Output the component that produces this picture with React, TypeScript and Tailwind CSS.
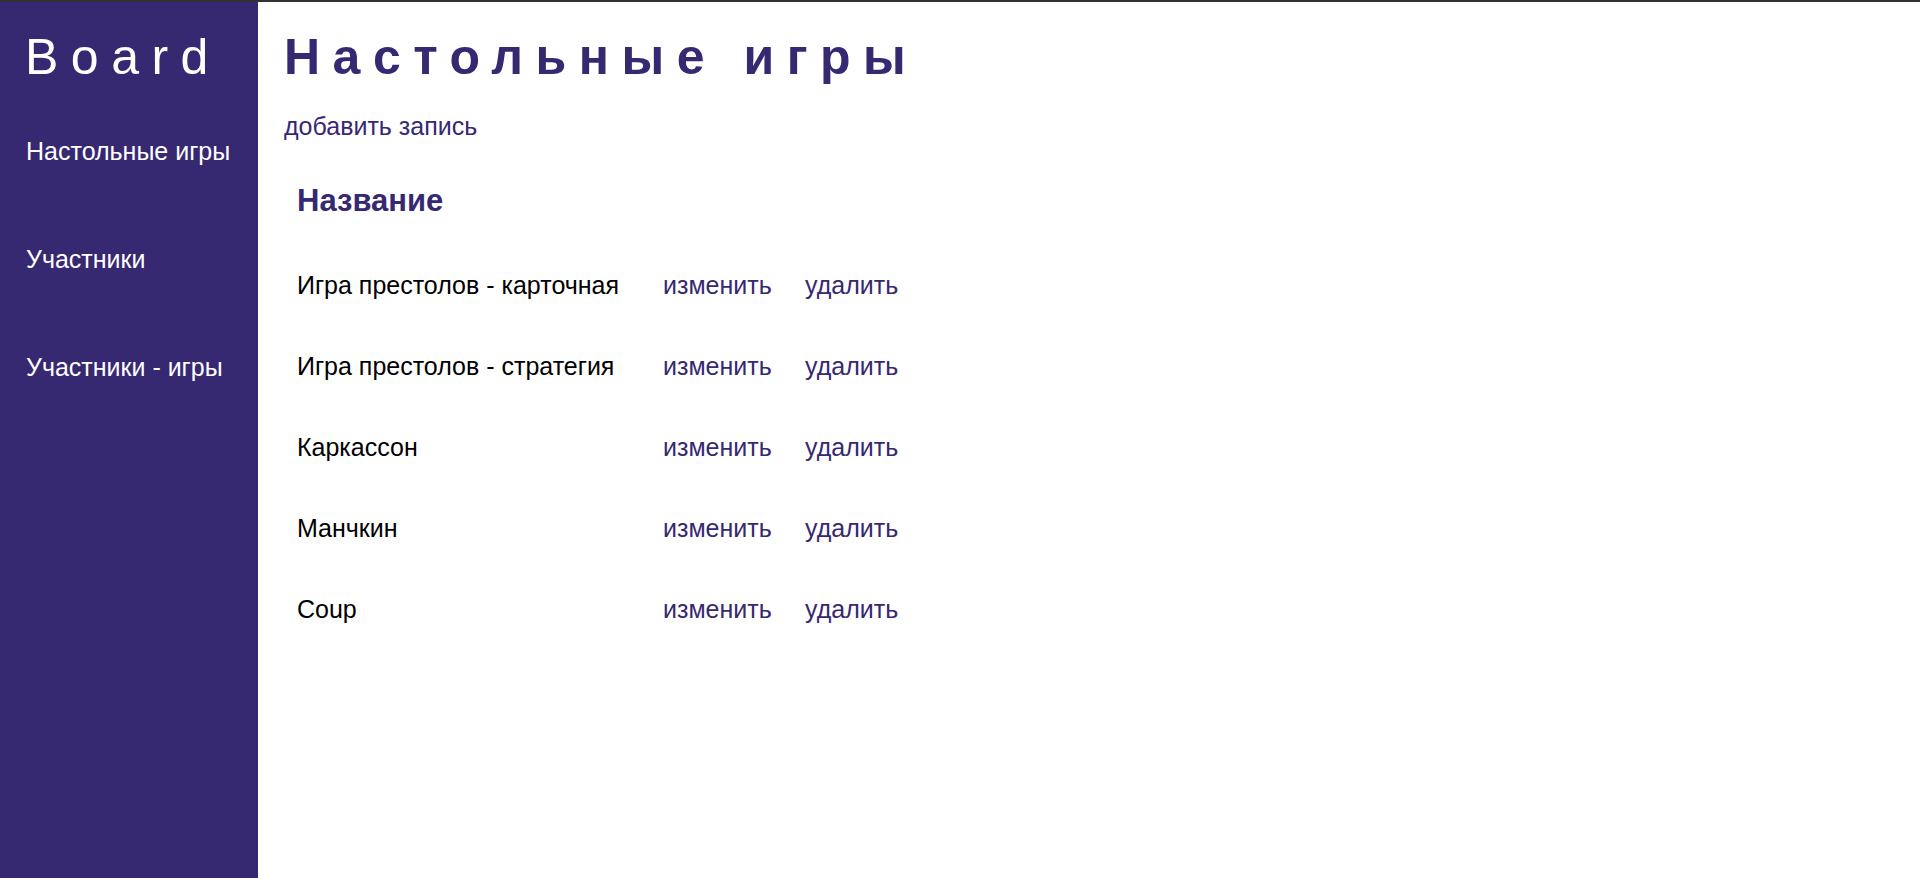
const games = [
  'Игра престолов - карточная',
  'Игра престолов - стратегия',
  'Каркассон',
  'Манчкин',
  'Coup',
];

const navItems = ['Настольные игры', 'Участники', 'Участники - игры'];

export default function App() {
  return (
    <div className="flex h-[878px] border-t-2 border-[#333333] bg-white font-['Liberation_Sans',Arial,sans-serif]">
      {/* sidebar */}
      <aside className="w-[258px] shrink-0 bg-[#372872] text-white">
        <div className="pl-[25px] pt-[26px] text-[50px] leading-[58px] tracking-[12.5px]">Board</div>
        <nav className="mt-[51px] flex flex-col gap-[79px] pl-[26px]">
          {navItems.map((item) => (
            <a key={item} href="#" className="text-[25px] leading-[29px] text-white">
              {item}
            </a>
          ))}
        </nav>
      </aside>

      {/* main content */}
      <main className="flex-1 pl-[26px] pt-[26px] text-[#372872]">
        <h1 className="text-[50px] font-bold leading-[58px] tracking-[12.5px]">Настольные игры</h1>
        <a href="#" className="mt-[26px] block text-[25px] leading-[29px] text-[#372872]">
          добавить запись
        </a>

        <div className="ml-[13px] mt-[41px]">
          <div className="text-[31px] font-bold leading-[37px]">Название</div>
          {games.map((name) => (
            <div key={name} className="mt-[52px] flex text-[25px] leading-[29px]">
              <span className="w-[366px] text-black">{name}</span>
              <a href="#" className="w-[142px] text-[#372872]">изменить</a>
              <a href="#" className="text-[#372872]">удалить</a>
            </div>
          ))}
        </div>
      </main>
    </div>
  );
}
